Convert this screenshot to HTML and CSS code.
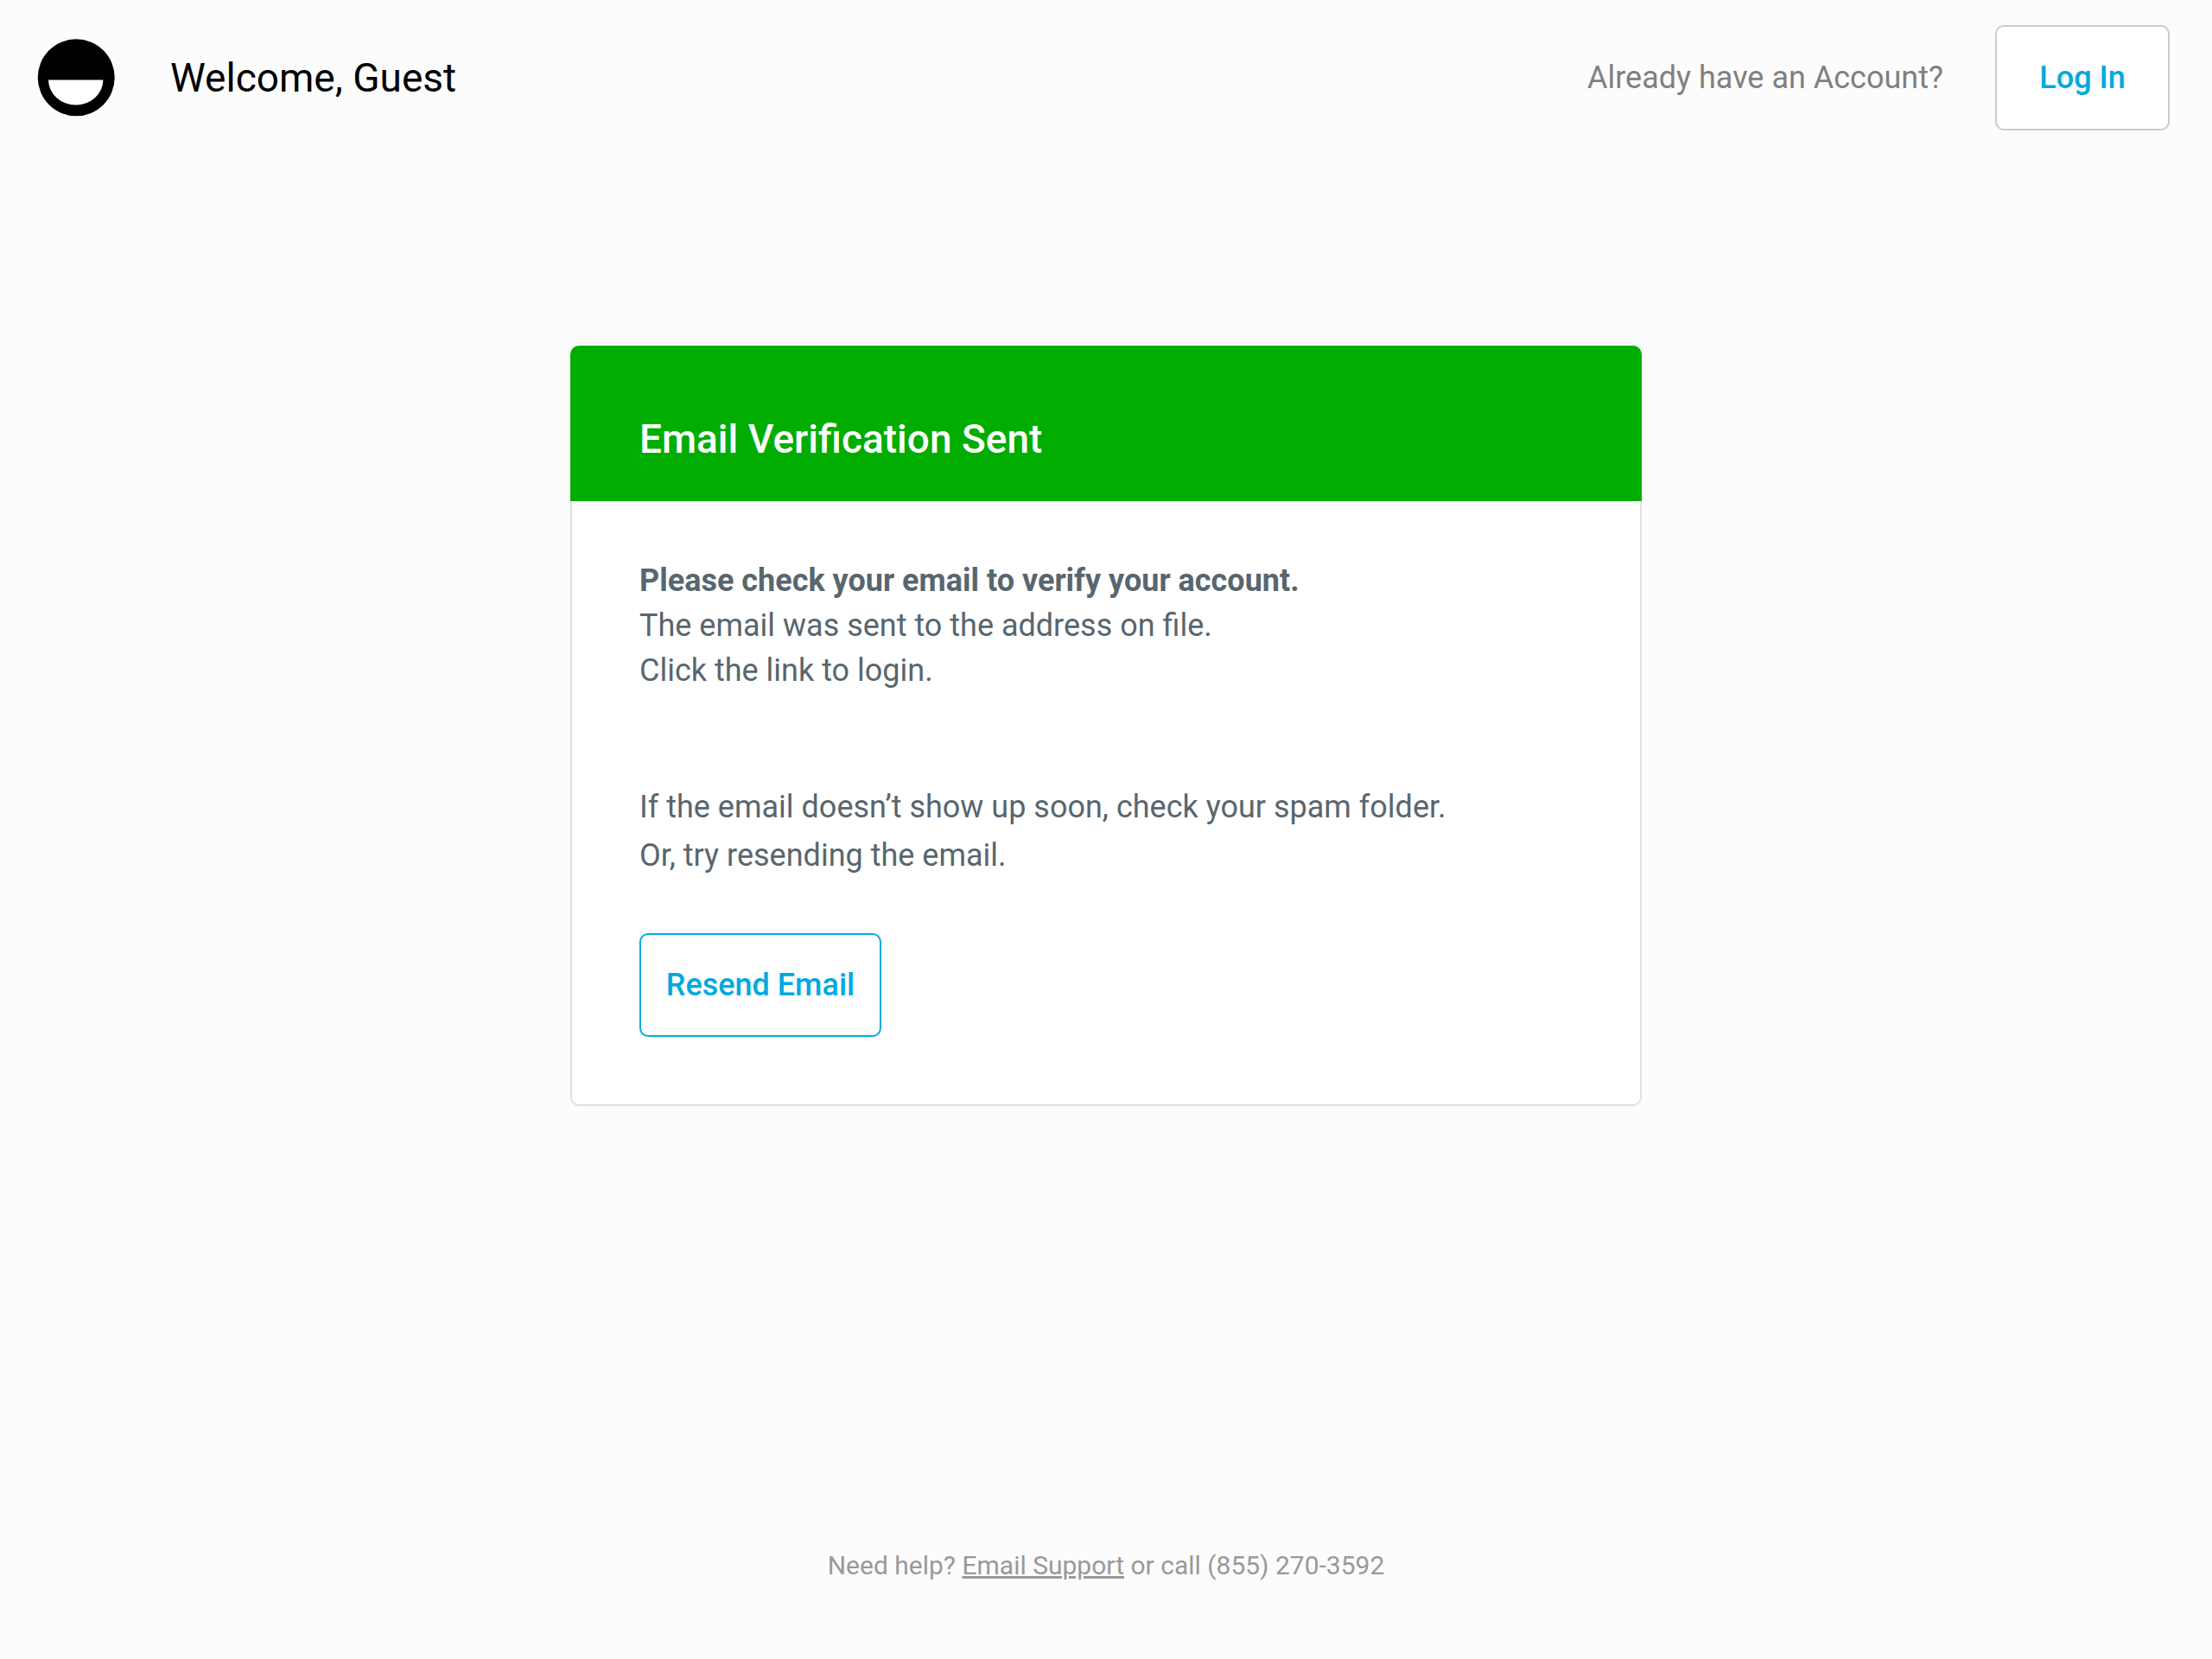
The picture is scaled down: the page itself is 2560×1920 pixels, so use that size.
FILE: index.html
```html
<!DOCTYPE html>
<html lang="en">
<head>
  <meta charset="utf-8">
  <meta name="viewport" content="width=device-width, initial-scale=1">
  <title>Email Verification Sent</title>
  <link rel="stylesheet" href="styles.css">
</head>
<body class="page">
  <header class="topbar">
    <svg class="logo" viewBox="0 0 90 90" aria-hidden="true">
      <circle cx="45.2" cy="44.8" r="44.5" fill="#000"/>
      <path d="M13 47.5H76.4A31.7 29 0 0 1 13 47.5Z" fill="#fff"/>
    </svg>
    <p class="welcome">Welcome, Guest</p>
    <p class="account-prompt">Already have an Account?</p>
    <button class="button button-login" type="button">Log In</button>
  </header>

  <main class="content">
    <section class="card">
      <div class="card-header">
        <h1 class="card-title">Email Verification Sent</h1>
      </div>
      <div class="card-body">
        <p class="message"><strong>Please check your email to verify your account.</strong><br>The email was sent to the address on file.<br>Click the link to login.</p>
        <p class="hint">If the email doesn’t show up soon, check your spam folder.<br>Or, try resending the email.</p>
        <button class="button button-resend" type="button">Resend Email</button>
      </div>
    </section>
  </main>

  <footer class="footer">
    <p class="help">Need help? <a class="help-link" href="#support">Email Support</a> or call (855) 270-3592</p>
  </footer>
</body>
</html>
```

FILE: styles.css
```css
* {
  box-sizing: border-box;
}

.page {
  display: flex;
  flex-direction: column;
  min-height: 100vh;
  margin: 0;
  background: #fcfcfc;
  color: #58666e;
  font-family: Roboto, sans-serif;
  font-size: 36px;
  line-height: 52px;
}

p,
h1 {
  margin: 0;
}

.topbar {
  display: flex;
  align-items: center;
  min-height: 180px;
  padding: 0 49px 0 43px;
}

.logo {
  flex: none;
  width: 90px;
  height: 90px;
}

.welcome {
  margin: 0 auto 0 64px;
  color: #000;
  font-size: 46px;
  line-height: 60px;
}

.account-prompt {
  margin-right: 60px;
  color: #808080;
}

.button {
  border: 2px solid #00a9e0;
  border-radius: 10px;
  background: #fff;
  color: #00a9e0;
  font: inherit;
  font-weight: 500;
  cursor: pointer;
}

.button-login {
  min-width: 202px;
  height: 122px;
  border-color: #ccc;
}

.button-resend {
  min-width: 280px;
  height: 120px;
}

.content {
  flex: 1;
  padding: 220px 40px 80px;
}

.card {
  max-width: 1240px;
  margin: 0 auto;
}

.card-header {
  padding: 78px 80px 42px;
  border-radius: 10px 10px 0 0;
  background: #00ad00;
}

.card-title {
  color: #fff;
  font-size: 46px;
  font-weight: 500;
  line-height: 60px;
}

.card-body {
  padding: 66px 78px 78px;
  border: 2px solid #e0e0e0;
  border-top: 0;
  border-radius: 0 0 10px 10px;
  background: #fff;
}

.hint {
  margin: 104px 0 62px;
  line-height: 56px;
}

.footer {
  padding: 0 40px 88px;
  color: #999;
  font-size: 30px;
  line-height: 40px;
  text-align: center;
}

.help-link {
  color: inherit;
}
```
